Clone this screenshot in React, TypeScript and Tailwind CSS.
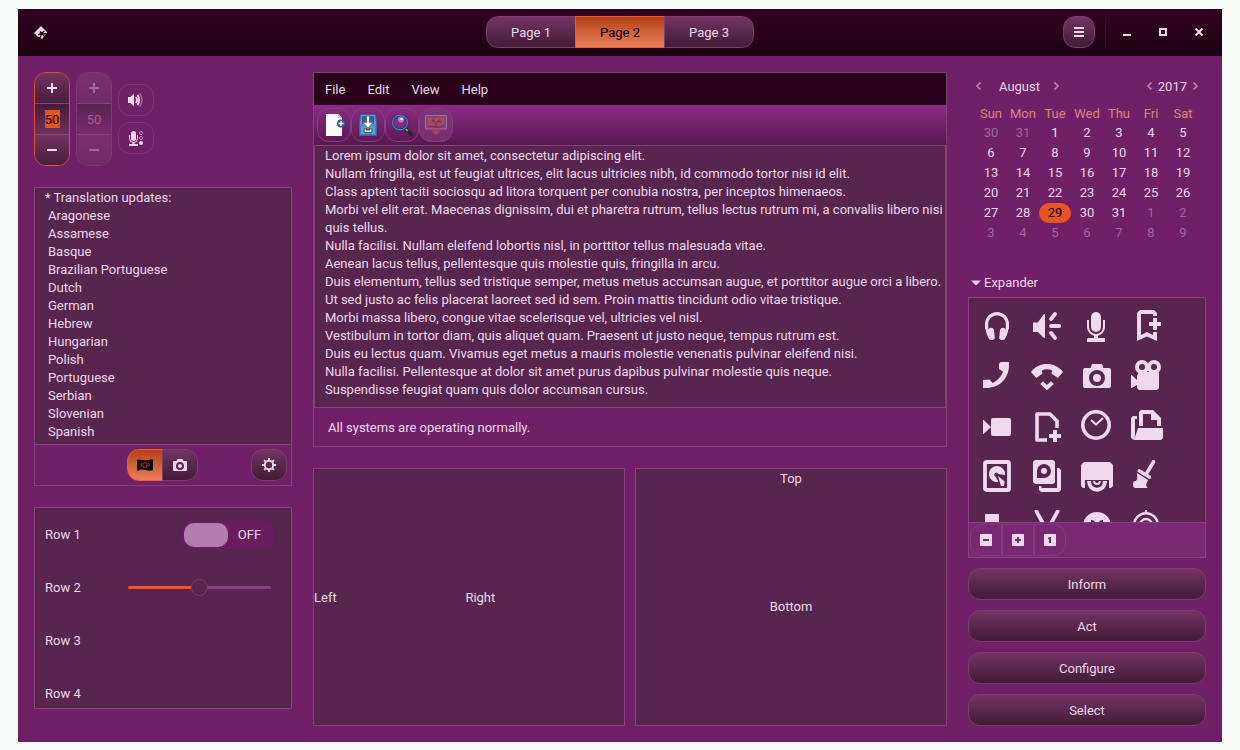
import React, { useState } from "react";

type IconProps = { children: React.ReactNode; className?: string };

function Sym({ children, className = "size-4" }: IconProps) {
  return (
    <svg viewBox="0 0 16 16" fill="currentColor" className={className} aria-hidden="true">
      {children}
    </svg>
  );
}

const line = { fill: "none", stroke: "currentColor" } as const;

const raised = "border border-[#75406d] bg-linear-to-b from-[#753363] via-[#5a274e] to-[#431b37]";
const active = "border border-[#e95d2f] bg-linear-to-b from-[#b5400f] to-[#ea8059] text-black";
const flat = "border border-[#833579]";

const cameraPath =
  "M5.5 2h5l.8 2H14a1 1 0 0 1 1 1v8a1 1 0 0 1-1 1H2a1 1 0 0 1-1-1V5a1 1 0 0 1 1-1h2.700zM8 5a4 4 0 1 0 0 8 4 4 0 0 0 0-8zm0 2a2 2 0 1 1 0 4 2 2 0 0 1 0-4z";

const gallery: { name: string; art: React.ReactNode }[] = [
  {
    name: "Headphones",
    art: (
      <>
        <path {...line} strokeWidth="1.600" d="M2.800 9.500V7a5.200 5.200 0 0 1 10.400 0v2.500" />
        <path d="M2 7.500c.2 2.500.8 5 2 7 .8.900 2.800.7 2.900-.5L6.600 10.500C6.300 8.800 4.700 8.300 3.500 9.800zM14 7.500c-.2 2.500-.8 5-2 7-.8.900-2.800.7-2.900-.5l.3-3.500c.3-1.700 1.900-2.200 3.100-.7z" />
      </>
    ),
  },
  {
    name: "Speaker",
    art: (
      <>
        <path d="M1 6.200h2.400L6.500 2H7v12h-.5L3.400 11H1z" />
        <path {...line} strokeWidth="1.900" strokeLinecap="round" d="M10 4.500 12 2M10 8h4.100M10 11.500l2 2.500" />
      </>
    ),
  },
  {
    name: "Microphone",
    art: (
      <>
        <rect x="5" y="1" width="5" height="10" rx="2.500" />
        <path {...line} strokeWidth="1" d="M3.500 5v3.500a4 4 0 0 0 8 0V5" />
        <path d="M6.500 12h2v2H12v2H3v-1.500l.5-.5h3z" />
      </>
    ),
  },
  {
    name: "Add bookmark",
    art: (
      <>
        <path d="M4.500 0h7L13 1.500V3h-2V2H5v10.500L8 11l3 1.500V11h2v4.500l-5-2.300-5 2.300v-14z" />
        <path d="M11 4h2v2h2v2h-2v2h-2V8H9V6h2z" />
      </>
    ),
  },
  {
    name: "Start call",
    art: (
      <path d="M9.800 1H14v1.500C14 9.500 9 14 2.500 14H1v-4l3.200-.2L5.800 11.500C8.200 10.500 10.200 8.200 11 5.900L9 4.500V2z" />
    ),
  },
  {
    name: "End call",
    art: (
      <>
        <path d="M0 6c2-2.700 5-4 8-4s6 1.300 8 4l-2.600 3-3.200-2.200.4-1.600c-1.500-.7-3.700-.7-5.200 0l.4 1.600L2.600 9z" />
        <path {...line} strokeWidth="2" d="m5.300 11.300 2.700 2.500 2.700-2.500" />
      </>
    ),
  },
  { name: "Camera", art: <path fillRule="evenodd" d={cameraPath} /> },
  {
    name: "Film camera",
    art: (
      <>
        <circle {...line} strokeWidth="2" cx="5.500" cy="3.500" r="2.500" />
        <circle {...line} strokeWidth="2" cx="11.500" cy="3.500" r="2.500" />
        <path d="M3 8l1-2h9.500l.5.500V14l-1 1H4l-1-1v-1.500L.4 14H0V7.500h.4L3 10z" />
      </>
    ),
  },
  {
    name: "Video camera",
    art: (
      <>
        <path d="M1 5h.3L5 8.500 1.300 12H1z" />
        <rect x="5" y="4" width="10" height="9" rx="1" />
      </>
    ),
  },
  {
    name: "New document",
    art: (
      <>
        <path {...line} strokeWidth="1.800" strokeLinejoin="round" d="M8 15H3V2h6.500L13 5.500V9" />
        <path d="M11 10h2v2h2v2h-2v2h-2v-2H9v-2h2z" />
      </>
    ),
  },
  {
    name: "Clock",
    art: (
      <>
        <circle {...line} strokeWidth="1.800" cx="7.500" cy="7.500" r="6.600" />
        <path {...line} strokeWidth="1" d="m5 5 2.500 2.300L11 4" />
      </>
    ),
  },
  {
    name: "Open folder",
    art: (
      <>
        <path d="M4 8V1l1-1h6l4 4v4h-2V5h-3V2H6v6z" />
        <path d="M3.500 9H16v5l-1 1H1.500zM0 4l1-1h2v1.500H2V13l-.5 2L0 14z" />
      </>
    ),
  },
  {
    name: "Hard disk",
    art: (
      <>
        <rect {...line} strokeWidth="1.900" x="2" y="1" width="12" height="14" rx="0.800" />
        <path
          fillRule="evenodd"
          d="M8 3a4 4 0 0 1 4 4.500L8.600 7A1 1 0 1 0 7.200 8.200l1.600 2.700A4 4 0 1 1 8 3zM8.500 8l3.300 2.800L11.500 13H10z"
        />
      </>
    ),
  },
  {
    name: "Media",
    art: (
      <>
        <path
          fillRule="evenodd"
          d="M2 0h9l1 1v10l-1 1H2l-1-1V1zM6.500 2A3.500 3.500 0 0 0 3 5.500V9h3.500a3.500 3.500 0 0 0 0-7zm0 2a1.500 1.500 0 1 1 0 3 1.500 1.500 0 0 1 0-3z"
        />
        <path d="M13 4h1l1 1v10l-1 1H5l-1-1v-2h1l.5 1H13z" />
      </>
    ),
  },
  {
    name: "Optical drive",
    art: (
      <>
        <path d="M1.500 1h13L16 2.500V13l-1 1h-1V10H2v4H1l-1-1V2.500z" />
        <path {...line} strokeWidth="2" d="M4 10.500c.2 5.800 7.800 5.800 8 0" />
        <path {...line} strokeWidth="1" d="M6.500 10.500c.2 2 2.800 2 3 0" />
      </>
    ),
  },
  {
    name: "Clear",
    art: (
      <>
        <path {...line} strokeWidth="1.800" strokeLinecap="round" d="M11.300.9 8.200 6M4.200 5.500l5 3" />
        <path d="M3 6.500 8.500 10 7.500 12.500l.8 1.500H2c-1.200-.5-1.200-1.800-.7-3.200.8-.2 1.500-.5 1.800-1.300z" />
      </>
    ),
  },
  { name: "Flag", art: <path d="M2 2h7v4h5v10H2z" /> },
  {
    name: "Cut",
    art: <path {...line} strokeWidth="1.900" strokeLinecap="round" d="M2.700.7 9.500 13M13.300.7 6.500 13" />,
  },
  {
    name: "Face",
    art: (
      <path
        fillRule="evenodd"
        d="M8 1a7 7 0 1 1 0 14A7 7 0 0 1 8 1zM5 5l1.500.3L7.500 7H5zM11 5l-1.500.3L8.500 7H11z"
      />
    ),
  },
  {
    name: "Webcam",
    art: (
      <>
        <circle {...line} strokeWidth="1.300" cx="7.500" cy="7.500" r="5.900" />
        <circle {...line} strokeWidth="1.200" cx="7.500" cy="7.500" r="3" />
        <path d="M7 0h1v2H7z" />
      </>
    ),
  },
];

const languages = [
  "Aragonese", "Assamese", "Basque", "Brazilian Portuguese", "Dutch", "German", "Hebrew",
  "Hungarian", "Polish", "Portuguese", "Serbian", "Slovenian", "Spanish",
];

const paragraphs = [
  "Lorem ipsum dolor sit amet, consectetur adipiscing elit.",
  "Nullam fringilla, est ut feugiat ultrices, elit lacus ultricies nibh, id commodo tortor nisi id elit.",
  "Class aptent taciti sociosqu ad litora torquent per conubia nostra, per inceptos himenaeos.",
  "Morbi vel elit erat. Maecenas dignissim, dui et pharetra rutrum, tellus lectus rutrum mi, a convallis libero nisi quis tellus.",
  "Nulla facilisi. Nullam eleifend lobortis nisl, in porttitor tellus malesuada vitae.",
  "Aenean lacus tellus, pellentesque quis molestie quis, fringilla in arcu.",
  "Duis elementum, tellus sed tristique semper, metus metus accumsan augue, et porttitor augue orci a libero.",
  "Ut sed justo ac felis placerat laoreet sed id sem. Proin mattis tincidunt odio vitae tristique.",
  "Morbi massa libero, congue vitae scelerisque vel, ultricies vel nisl.",
  "Vestibulum in tortor diam, quis aliquet quam. Praesent ut justo neque, tempus rutrum est.",
  "Duis eu lectus quam. Vivamus eget metus a mauris molestie venenatis pulvinar eleifend nisi.",
  "Nulla facilisi. Pellentesque at dolor sit amet purus dapibus pulvinar molestie quis neque.",
  "Suspendisse feugiat quam quis dolor accumsan cursus.",
];

function HeaderBar() {
  const [page, setPage] = useState(2);
  return (
    <header className="grid h-[47px] grid-cols-[1fr_auto_1fr] items-start bg-linear-to-b from-[#33001f] via-[#290019] to-[#1d0012] px-4 pt-[7px]">
      <div className="flex h-8 items-center">
        <svg viewBox="0 0 13 13" className="size-[13px]" aria-hidden="true">
          <path d="M7 0 13 6v1l-5 6-1.500-1L6 10.800 4 11 0 7z" fill="#f0d8ee" />
          <path
            d="M7.500 7.300 10.500 5M7.500 7.300 13 8M7.500 7.300 6 5.500M7.500 7.300 4 8.800M7.500 7.300 6.500 11.500M7.500 7.300 10.500 10.500"
            fill="none"
            stroke="#290019"
            strokeWidth="1.300"
          />
          <circle cx="7.700" cy="7.300" r="1.500" fill="#290019" />
        </svg>
      </div>
      <nav className="flex">
        {[1, 2, 3].map((n) => (
          <button
            key={n}
            onClick={() => setPage(n)}
            className={`h-8 w-[90px] -ml-px pt-0.5 first:ml-0 first:rounded-l-xl last:rounded-r-xl ${page === n ? active : raised}`}
          >
            Page {n}
          </button>
        ))}
      </nav>
      <div className="-mr-px flex items-center justify-end">
        <button aria-label="Menu" className={`grid size-8 place-items-center rounded-xl ${raised}`}>
          <Sym>
            <path d="M3 3h10v2H3zM3 7h10v2H3zM3 11h10v2H3z" />
          </Sym>
        </button>
        <div className="ml-[10px] h-8 w-px bg-[#390a2c]" />
        <div className="ml-[13px] flex gap-5">
          <button aria-label="Minimize" className="size-4">
            <Sym><path d="M4 10h8v2H4z" /></Sym>
          </button>
          <button aria-label="Maximize" className="size-4">
            <Sym><path fillRule="evenodd" d="M4 4h8v8H4zM6 6v4h4V6z" /></Sym>
          </button>
          <button aria-label="Close" className="size-4">
            <Sym><path {...line} strokeWidth="2" d="m4.500 4.500 7 7M11.500 4.500l-7 7" /></Sym>
          </button>
        </div>
      </div>
    </header>
  );
}

function Spinner({ label, disabled = false }: { label: string; disabled?: boolean }) {
  const [value, setValue] = useState("50");
  const step = (d: number) => setValue(String(Number(value) + d));
  const end = disabled ? "bg-linear-to-b from-[#7a3070] to-[#6e2b65]" : "bg-linear-to-b from-[#753363] to-[#4a1e3d]";
  return (
    <div
      className={`flex h-[94px] w-9 flex-col overflow-hidden rounded-xl border ${disabled ? "border-[#7d3876] text-[#a068a0]" : "border-[#dd5030]"}`}
    >
      <button aria-label={`Increase ${label}`} disabled={disabled} onClick={() => step(1)} className={`grid h-[30px] place-items-center ${end}`}>
        <Sym><path d="M7 3h2v4h4v2H9v4H7V9H3V7h4z" /></Sym>
      </button>
      <div className={`grid flex-1 place-items-center border-y border-[#84447c] bg-linear-to-b ${disabled ? "from-[#582350] to-[#7a2c70]" : "from-[#451b39] to-[#6e305e]"}`}>
        <input
          aria-label={label}
          disabled={disabled}
          value={value}
          onChange={(e) => setValue(e.target.value)}
          className={`h-[18px] w-[15px] pt-px text-center ${disabled ? "text-[#a85f94]" : "bg-[#e95420] text-black"}`}
        />
      </div>
      <button aria-label={`Decrease ${label}`} disabled={disabled} onClick={() => step(-1)} className={`grid h-[30px] place-items-center ${end}`}>
        <Sym><path d="M3 7h10v2H3z" /></Sym>
      </button>
    </div>
  );
}

function Controls() {
  return (
    <div className="flex gap-1.5">
      <Spinner label="Value" />
      <Spinner label="Locked value" disabled />
      <div className="flex flex-col justify-center gap-1.5">
        <button aria-label="Volume" className={`grid h-8 w-9 place-items-center rounded-xl ${flat}`}>
          <Sym>
            <path d="M0 5h2.500L5.500 2H6v12h-.5l-3-3H0z" />
            <path {...line} strokeWidth="1.800" d="M7.700 5a4.500 4.500 0 0 1 0 6M9.500 3c2.200 2.700 2.200 7.300 0 10" />
            <path {...line} strokeWidth="1.500" opacity=".4" d="M11.700 1.500c3 3.600 3 9.400 0 13" />
          </Sym>
        </button>
        <button aria-label="Microphone level" className={`grid h-8 w-9 place-items-center rounded-xl ${flat}`}>
          <Sym>
            <rect x="3" y="1" width="5" height="10" rx="2.500" />
            <path {...line} d="M1.500 5v3.500a4 4 0 0 0 8 0V5" />
            <path d="M4.500 12h2v2H10v2H1v-1.500l.5-.5h3z" />
            <circle {...line} strokeWidth=".9" opacity=".6" cx="13" cy="3" r="1.600" />
            <circle {...line} strokeWidth=".9" opacity=".6" cx="13" cy="8" r="1.600" />
            <circle cx="13" cy="13" r="2" />
          </Sym>
        </button>
      </div>
    </div>
  );
}

function UpdatesPanel() {
  return (
    <section className="mt-[21px] border border-[#85407d]">
      <div className="h-[256px] overflow-hidden bg-[#57254e] px-[10px] pt-px leading-[18px]">
        <p>* Translation updates:</p>
        <ul>
          {languages.map((l) => (
            <li key={l} className="pl-[3px]">{l}</li>
          ))}
        </ul>
      </div>
      <div className="grid h-[41px] grid-cols-[1fr_auto_1fr] items-center border-t border-[#85407d] pr-1 pl-0.5">
        <div className="col-start-2 flex">
          <button aria-label="Flag view" className={`grid h-8 w-9 place-items-center rounded-l-xl ${active}`}>
            <Sym>
              <path d="M0 3c3-1.300 5 .4 8 .4S13 2 15.500 2.600L16 3v10c-3 1.200-5 .5-8-.1S3 12.600.5 14L0 13z" />
              <g fill="none" stroke="#c0501c" strokeWidth=".9">
                <circle cx="8" cy="8" r="2.300" />
                <path d="M4.700 5.800c-1 1.300-1 3.100 0 4.400M11.300 5.800c1 1.300 1 3.100 0 4.400M6 11l.8-.8M10 11l-.8-.8" />
              </g>
            </Sym>
          </button>
          <button aria-label="Camera view" className={`-ml-px grid h-8 w-9 place-items-center rounded-r-xl ${raised}`}>
            <Sym><path fillRule="evenodd" d={cameraPath} /></Sym>
          </button>
        </div>
        <button aria-label="Settings" className={`grid h-8 w-9 place-items-center justify-self-end rounded-xl ${raised}`}>
          <Sym>
            <circle {...line} strokeWidth="2" cx="8" cy="8" r="4.200" />
            <path
              {...line}
              strokeWidth="1.900"
              d="M8 1v2.500M8 12.500V15M1 8h2.500M12.500 8H15M3.100 3.100l1.700 1.700M11.200 11.200l1.700 1.700M3.100 12.900l1.700-1.700M11.200 4.800l1.700-1.700"
            />
          </Sym>
        </button>
      </div>
    </section>
  );
}

function RowsPanel() {
  const [on, setOn] = useState(false);
  const [level, setLevel] = useState(50);
  return (
    <section className="mt-[21px] h-[202px] overflow-hidden border border-[#85407d] bg-[#57254e]">
      <div className="flex h-[53px] items-center justify-between pl-[10px] pr-4">
        <span>Row 1</span>
        <button
          role="switch"
          aria-checked={on}
          aria-label="Row 1"
          onClick={() => setOn(!on)}
          className="flex h-[28px] w-[93px] items-center rounded-[10px] bg-[#681d5e] p-0.5"
        >
          <span className="h-6 w-11 rounded-[10px] bg-[#b47db0]" />
          <span className="flex-1 pr-0.5 text-center">{on ? "ON" : "OFF"}</span>
        </button>
      </div>
      <div className="flex h-[53px] items-center justify-between pl-[10px] pr-5">
        <label htmlFor="row2">Row 2</label>
        <input
          id="row2"
          type="range"
          value={level}
          onChange={(e) => setLevel(Number(e.target.value))}
          style={{ backgroundImage: `linear-gradient(to right, #f05522 ${level}%, #8e3f88 ${level}%)` }}
          className="h-[3px] w-[143px] appearance-none rounded-full [&::-webkit-slider-thumb]:size-[17px] [&::-webkit-slider-thumb]:appearance-none [&::-webkit-slider-thumb]:rounded-full [&::-webkit-slider-thumb]:border [&::-webkit-slider-thumb]:border-solid [&::-webkit-slider-thumb]:border-[#75406d] [&::-webkit-slider-thumb]:bg-[#57254e]"
        />
      </div>
      <div className="flex h-[53px] items-center pl-[10px]">Row 3</div>
      <div className="flex h-[53px] items-center pl-[10px]">Row 4</div>
    </section>
  );
}

function Editor() {
  const tool = "grid size-[34px] place-items-center rounded-xl border border-[#8c3a84]";
  return (
    <section className="flex flex-col border border-[#85407d]">
      <nav className="flex h-8 items-center gap-[22px] bg-[#29001a] px-[11px] pt-0.5">
        {["File", "Edit", "View", "Help"].map((m) => (
          <button key={m}>{m}</button>
        ))}
      </nav>
      <div className="flex h-10 items-center bg-linear-to-b from-[#8f2a87] via-[#72226b] to-[#57184f] px-[3px]">
        <button aria-label="New" className={tool}>
          <svg viewBox="0 0 24 24" className="size-6" aria-hidden="true">
            <path d="M4 1h12l4 4v18H4z" fill="#f8fbf6" />
            <path d="M16 1v4h4z" fill="#c9cdc8" />
            <circle cx="19" cy="10.500" r="4" fill="#2f5e9e" />
            <path d="M18.300 8h1.400v1.800h1.800v1.400h-1.800V13h-1.400v-1.800h-1.800V9.800h1.800z" fill="#fff" />
          </svg>
        </button>
        <button aria-label="Save" className={tool}>
          <svg viewBox="0 0 24 24" className="size-6" aria-hidden="true">
            <path d="M4.500 1.500h15l1 10v11h-17v-11z" fill="#5b98d2" stroke="#2e67a6" />
            <path d="M6 3h12v8H6z" fill="#2c5f9e" />
            <path d="M4.500 13h15v8.500h-15z" fill="#5f9fdb" stroke="#3d7bbb" />
            <path d="M10.500 3h3v6.500h3.500L12 15 7 9.500h3.500z" fill="#fff" stroke="#716a52" strokeWidth=".8" />
            <path d="M8 16h8v3.500H8z" fill="#f4f6f2" stroke="#3a4a5c" />
            <path d="M10 16.300h4v1.200h-4z" fill="#39424e" />
          </svg>
        </button>
        <button aria-label="Find" className={tool}>
          <svg viewBox="0 0 24 24" className="size-6" aria-hidden="true">
            <path d="m14.500 15 3 2 4 4.500" fill="none" stroke="#24242a" strokeWidth="3.500" strokeLinecap="round" />
            <path d="m15 15.500 3 2.500" stroke="#a9adb5" strokeWidth="1.300" />
            <circle cx="10" cy="9.500" r="7.400" fill="#773285" stroke="#253d76" strokeWidth="2.800" />
            <circle cx="10" cy="9.500" r="7.400" fill="none" stroke="#638ccb" strokeWidth="1" />
            <circle cx="11" cy="6.500" r="3" fill="#c49acc" opacity=".75" />
            <circle cx="11.500" cy="6" r="1.300" fill="#fff" />
          </svg>
        </button>
        <button aria-label="Picture" disabled className={`${tool} bg-[#7d3975]/70`}>
          <svg viewBox="0 0 24 24" className="size-6 opacity-75" aria-hidden="true">
            <path d="M1.500 2.500h21v13.500h-21z" fill="#8f4876" stroke="#b07cb0" />
            <path d="M4 5h16v8.500H4z" fill="#b5515c" />
            <path d="M12 14v-3.500L8 7M12 10.500 16 6M14 8l4 1M10 9l-1-4M4 13l6 1h6l4-2" fill="none" stroke="#6b274e" strokeWidth="1" />
            <path d="M7 17.500h10L12 22z" fill="#c0524f" />
          </svg>
        </button>
      </div>
      <div className="h-[263px] overflow-hidden border border-[#85407d] bg-[#57254e] pt-px pl-[10px] leading-[18px]">
        {paragraphs.map((p) => (
          <p key={p}>{p}</p>
        ))}
      </div>
      <footer className="flex h-[38px] items-center px-[14px] pt-0.5">All systems are operating normally.</footer>
    </section>
  );
}

function Calendar() {
  const [selected, setSelected] = useState(29);
  const days = Array.from({ length: 42 }, (_, i) => i - 1);
  const chevron = (d: string) => <Sym><path {...line} strokeWidth="1.500" d={d} /></Sym>;
  const left = "M9.500 3.500 6 7 9.500 10.500";
  const right = "M6.500 3.500 10 7 6.500 10.500";
  return (
    <div className="px-[7px]">
      <div className="flex h-[30px] items-center justify-between">
        <div className="flex items-center">
          <button aria-label="Previous month" className="-ml-1 text-[#b98ab8]">{chevron(left)}</button>
          <span className="w-[61px] pl-1 text-center">August</span>
          <button aria-label="Next month" className="text-[#b98ab8]">{chevron(right)}</button>
        </div>
        <div className="-mr-1 flex items-center">
          <button aria-label="Previous year" className="text-[#b98ab8]">{chevron(left)}</button>
          <span>2017</span>
          <button aria-label="Next year" className="text-[#b98ab8]">{chevron(right)}</button>
        </div>
      </div>
      <table className="w-full table-fixed text-center">
        <thead>
          <tr className="h-[21px] text-[#de8480]">
            {["Sun", "Mon", "Tue", "Wed", "Thu", "Fri", "Sat"].map((d) => (
              <th key={d} className="p-0 pt-0.5 text-center font-normal">{d}</th>
            ))}
          </tr>
        </thead>
        <tbody>
          {[0, 1, 2, 3, 4, 5].map((w) => (
            <tr key={w}>
              {days.slice(w * 7, w * 7 + 7).map((n) => {
                const outside = n < 1 || n > 31;
                const label = n < 1 ? n + 31 : n > 31 ? n - 31 : n;
                return (
                  <td key={n} className="p-0">
                    <button
                      onClick={() => !outside && setSelected(n)}
                      className={`block h-5 w-full rounded-full ${outside ? "text-[#a065a0]" : n === selected ? "bg-[#e95420] text-black" : ""}`}
                    >
                      {label}
                    </button>
                  </td>
                );
              })}
            </tr>
          ))}
        </tbody>
      </table>
    </div>
  );
}

function IconGallery() {
  const [open, setOpen] = useState(true);
  const small = "grid size-8 place-items-center first:rounded-l-xl last:rounded-r-xl border border-[#853a7e]";
  return (
    <>
      <button aria-expanded={open} onClick={() => setOpen(!open)} className="mt-[30px] flex h-5 items-center">
        <Sym><path d="M3 5.500h10L8 10.500z" /></Sym>
        Expander
      </button>
      <section className="mt-1 border border-[#85407d]">
        <div className="flex h-[224px] flex-col overflow-hidden bg-[#57254e] p-[3px]">
          <div className="grid grid-cols-[repeat(4,50px)]">
            {gallery.map((g) => (
              <div key={g.name} title={g.name} className="grid size-[50px] place-items-center">
                <Sym className="size-8">{g.art}</Sym>
              </div>
            ))}
          </div>
        </div>
        <div className="flex h-[35px] items-center border-t border-[#85407d] bg-[#792871] px-px">
          <button aria-label="Zoom out" className={small}>
            <Sym><path fillRule="evenodd" d="M2.500 2h11l.5.5v11l-.5.5h-11l-.5-.5v-11zM5 7v2h6V7z" /></Sym>
          </button>
          <button aria-label="Zoom in" className={small}>
            <Sym><path fillRule="evenodd" d="M2.500 2h11l.5.5v11l-.5.5h-11l-.5-.5v-11zM7 5v2H5v2h2v2h2V9h2V7H9V5z" /></Sym>
          </button>
          <button aria-label="Original size" className={small}>
            <Sym><path fillRule="evenodd" d="M2.500 2h11l.5.5v11l-.5.5h-11l-.5-.5v-11zM7.500 5 6 6v1h1v4h2V5z" /></Sym>
          </button>
        </div>
      </section>
    </>
  );
}

export default function App() {
  return (
    <div className="flex min-h-screen flex-col bg-[#f7fcf8] px-[18px] pt-[9px] pb-2 font-['Roboto','Liberation_Sans',sans-serif] text-[13px] leading-[18px] text-[#f0d8ee]">
      <HeaderBar />
      <main className="grid flex-1 grid-cols-[258px_minmax(0,1fr)_238px] gap-[21px] bg-[#6f2067] p-4">
        <div>
          <Controls />
          <UpdatesPanel />
          <RowsPanel />
        </div>
        <div className="flex flex-col gap-[21px]">
          <Editor />
          <div className="grid flex-1 grid-cols-2 gap-[10px]">
            <div className="flex items-center border border-[#85407d] bg-[#57254e] pt-0.5">
              <span>Left</span>
              <span className="flex-1 text-center">Right</span>
            </div>
            <div className="flex flex-col items-center border border-[#85407d] bg-[#57254e] pt-px">
              <span>Top</span>
              <span className="flex flex-1 items-center">Bottom</span>
            </div>
          </div>
        </div>
        <div>
          <Calendar />
          <IconGallery />
          <div className="mt-[10px] flex flex-col gap-[10px]">
            {["Inform", "Act", "Configure", "Select"].map((b) => (
              <button key={b} className={`h-8 rounded-xl pt-0.5 ${raised}`}>{b}</button>
            ))}
          </div>
        </div>
      </main>
    </div>
  );
}
